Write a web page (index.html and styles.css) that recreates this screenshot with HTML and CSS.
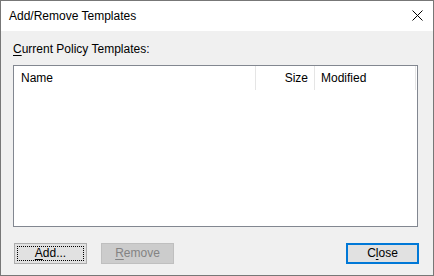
FILE: index.html
```html
<!DOCTYPE html>
<html lang="en">
<head>
    <meta charset="UTF-8">
    <title>Add/Remove Templates</title>
    <link rel="stylesheet" href="styles.css">
</head>
<body>
    <div class="window">
        <div class="titlebar">
            <span class="title">Add/Remove Templates</span>
            <svg class="close-x" width="11" height="11" viewBox="0 0 11 11">
                <path d="M0.5 0.5 L10.5 10.5 M10.5 0.5 L0.5 10.5" stroke="#000" stroke-width="1" fill="none"/>
            </svg>
        </div>

        <div class="content">
            <div class="label"><u>C</u>urrent Policy Templates:</div>

            <div class="listview">
                <div class="list-header">
                    <div class="col col-name">Name</div>
                    <div class="col col-size">Size</div>
                    <div class="col col-modified">Modified</div>
                </div>
            </div>

            <div class="buttons">
                <button class="btn focused"><span class="focus-rect"><u>A</u>dd...</span></button>
                <button class="btn disabled"><u>R</u>emove</button>
                <button class="btn default">C<u>l</u>ose</button>
            </div>
        </div>
    </div>
</body>
</html>
```

FILE: styles.css
```css
/* Global */
* {
    margin: 0;
    padding: 0;
    box-sizing: border-box;
}

body {
    font-family: 'Segoe UI', 'Liberation Sans', Arial, sans-serif;
    font-size: 12px;
    line-height: 15px;
    color: #000;
    background: #fff;
}

/* Dialog frame */
.window {
    width: 434px;
    height: 276px;
    border: 1px solid #777;
    background-color: #f0f0f0;
    display: flex;
    flex-direction: column;
}

.titlebar {
    height: 30px;
    background-color: #fff;
    display: flex;
    align-items: center;
    justify-content: space-between;
    padding: 0 10px 0 8px;
}

.close-x {
    display: block;
    margin-top: -1px;
}

.content {
    flex: 1;
    padding: 11px 15px 0 12px;
}

.label {
    height: 15px;
}

u {
    text-decoration: underline;
    text-underline-offset: 2px;
}

/* List view */
.listview {
    margin-top: 8px;
    height: 162px;
    border: 1px solid #828790;
    background-color: #fff;
}

.list-header {
    display: flex;
    height: 24px;
}

.col {
    display: flex;
    align-items: center;
    border-right: 1px solid #e5e5e5;
    padding: 0 6px;
}

.col-name {
    width: 242px;
    padding-left: 7px;
}

.col-size {
    width: 59px;
    justify-content: flex-end;
}

.col-modified {
    width: 101px;
}

/* Buttons */
.buttons {
    display: flex;
    margin: 16px -1px 0 1px;
}

.btn {
    width: 73px;
    height: 21px;
    font: inherit;
    color: #000;
    background-color: #e1e1e1;
    border: 1px solid #adadad;
    display: flex;
    align-items: center;
    justify-content: center;
}

.btn + .btn {
    margin-left: 14px;
}

.focus-rect {
    display: flex;
    align-items: center;
    justify-content: center;
    width: 67px;
    height: 15px;
    border: 1px dotted #000;
}

.btn.disabled {
    background-color: #cccccc;
    border-color: #bfbfbf;
    color: #838383;
}

.btn.default {
    margin-left: auto;
    border: 2px solid #0078d7;
}
```
